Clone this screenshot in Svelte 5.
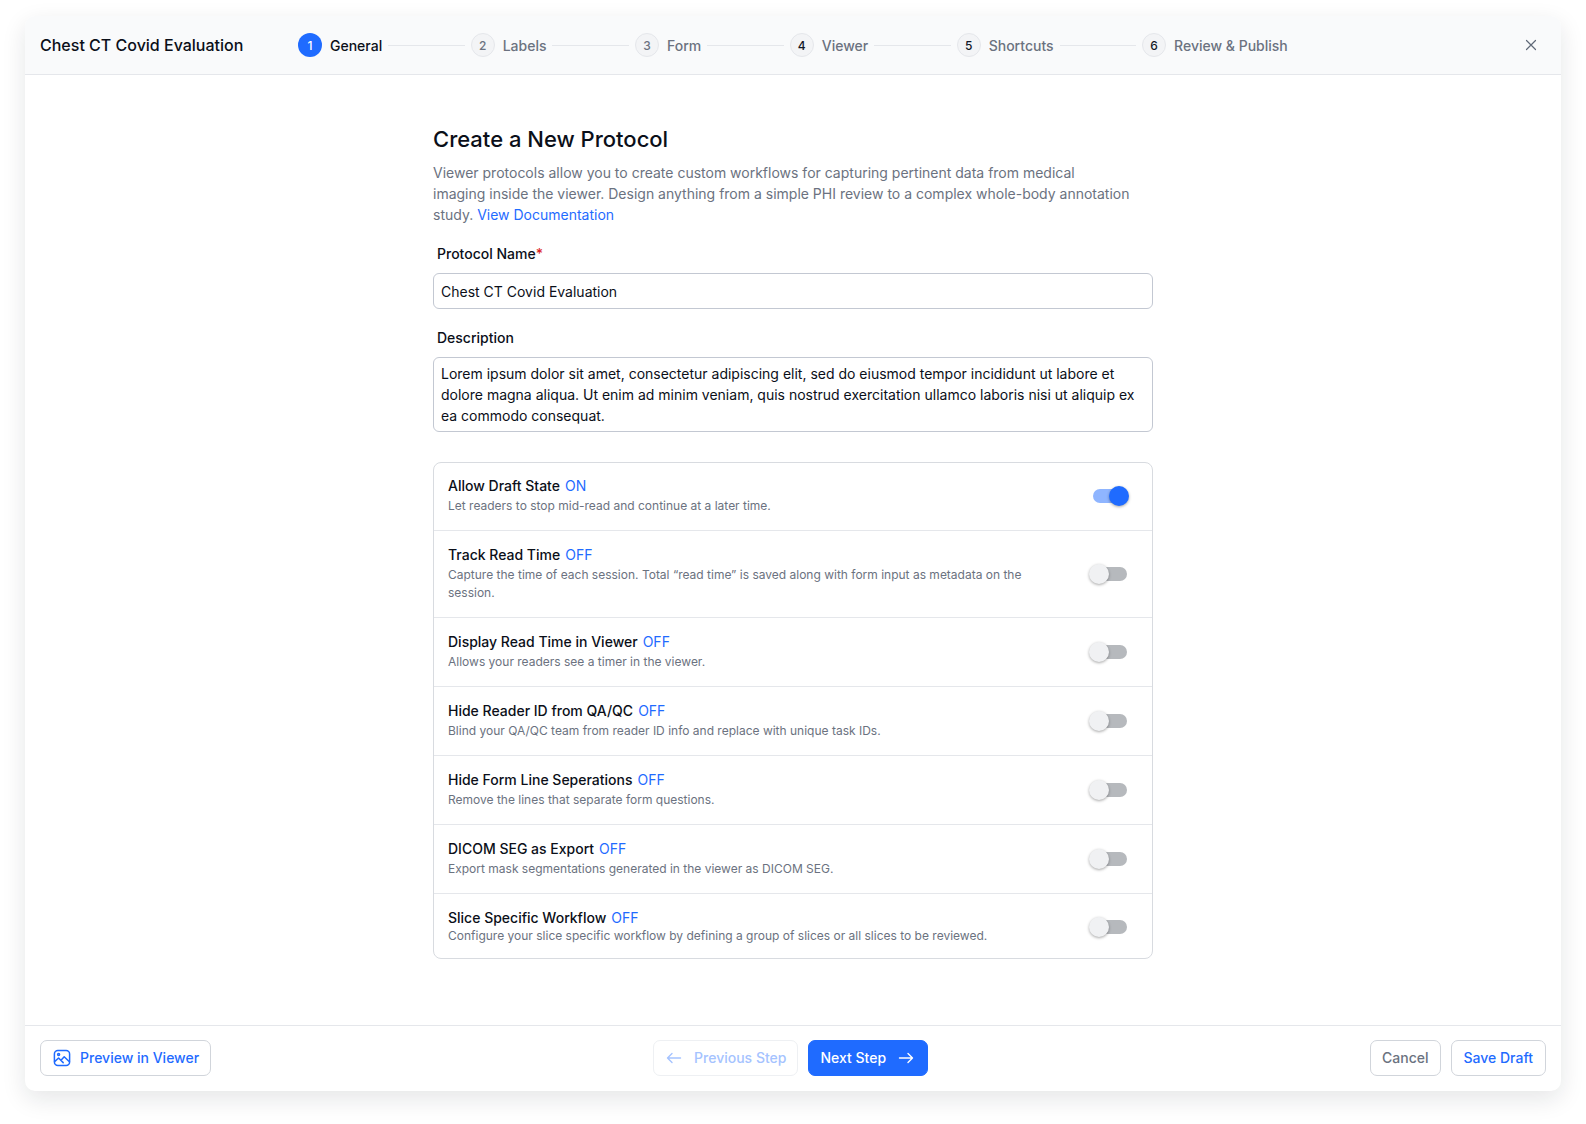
<script>
	const steps = ['General', 'Labels', 'Form', 'Viewer', 'Shortcuts', 'Review & Publish'];

	let options = $state([
		{ title: 'Allow Draft State', desc: 'Let readers to stop mid-read and continue at a later time.', on: true },
		{
			title: 'Track Read Time',
			desc: 'Capture the time of each session. Total “read time” is saved along with form input as metadata on the session.',
			on: false
		},
		{ title: 'Display Read Time in Viewer', desc: 'Allows your readers see a timer in the viewer.', on: false },
		{ title: 'Hide Reader ID from QA/QC', desc: 'Blind your QA/QC team from reader ID info and replace with unique task IDs.', on: false },
		{ title: 'Hide Form Line Seperations', desc: 'Remove the lines that separate form questions.', on: false },
		{ title: 'DICOM SEG as Export', desc: 'Export mask segmentations generated in the viewer as DICOM SEG.', on: false },
		{
			title: 'Slice Specific Workflow',
			desc: 'Configure your slice specific workflow by defining a group of slices or all slices to be reviewed.',
			on: false
		}
	]);

	let protocolName = $state('Chest CT Covid Evaluation');
	let description = $state(
		'Lorem ipsum dolor sit amet, consectetur adipiscing elit, sed do eiusmod tempor incididunt ut labore et dolore magna aliqua. Ut enim ad minim veniam, quis nostrud exercitation ullamco laboris nisi ut aliquip ex ea commodo consequat.'
	);
</script>

<div class="page">
	<div class="modal">
		<header>
			<div class="name">Chest CT Covid Evaluation</div>
			<ol class="stepper">
				{#each steps as step, i}
					{#if i > 0}<li class="line"></li>{/if}
					<li class="step" class:active={i === 0}>
						<span class="num" class:dark={i >= 3}>{i + 1}</span>
						<span>{step}</span>
					</li>
				{/each}
			</ol>
			<button class="close" aria-label="Close">
				<svg width="12" height="12" viewBox="0 0 12 12" fill="none" stroke="#5f6877" stroke-width="1.2" stroke-linecap="round">
					<path d="M1.5 1.5l9 9M10.5 1.5l-9 9" />
				</svg>
			</button>
		</header>

		<main>
			<div class="form">
				<h1>Create a New Protocol</h1>
				<p class="intro">
					Viewer protocols allow you to create custom workflows for capturing pertinent data from medical<br />
					imaging inside the viewer. Design anything from a simple PHI review to a complex whole-body annotation<br />
					study. <a href="#docs">View Documentation</a>
				</p>

				<label for="protocol-name">Protocol Name<span class="req">*</span></label>
				<input id="protocol-name" type="text" bind:value={protocolName} />

				<label for="description" class="second">Description</label>
				<textarea id="description" rows="3" bind:value={description}></textarea>

				<div class="options">
					{#each options as opt}
						<div class="option">
							<div class="text">
								<div class="title">{opt.title}<span class="state">{opt.on ? 'ON' : 'OFF'}</span></div>
								<div class="desc">{opt.desc}</div>
							</div>
							<button
								class="switch"
								class:on={opt.on}
								aria-label={opt.title}
								onclick={() => (opt.on = !opt.on)}
							>
								<span class="knob"></span>
							</button>
						</div>
					{/each}
				</div>
			</div>
		</main>

		<footer>
			<button class="btn blue preview">
				<svg width="18" height="18" viewBox="0 0 18 18" fill="none" stroke="#1f6bff" stroke-width="1.5" stroke-linejoin="round" stroke-linecap="round">
					<rect x="1.4" y="1.4" width="15.2" height="15.2" rx="3.5" />
					<circle cx="5.6" cy="5.4" r="1" />
					<path d="M1.6 12.6l4-3.6 4.6 4.6M8 11.2l3.2-3.4 5.2 5" />
				</svg>
				Preview in Viewer
			</button>

			<div class="center">
				<button class="btn prev" disabled>
					<svg width="16" height="12" viewBox="0 0 16 12" fill="none" stroke="currentColor" stroke-width="1.4" stroke-linecap="round" stroke-linejoin="round">
						<path d="M14.5 6h-13M6 1.5L1.5 6 6 10.5" />
					</svg>
					Previous Step
				</button>
				<button class="btn next">
					Next Step
					<svg width="16" height="12" viewBox="0 0 16 12" fill="none" stroke="currentColor" stroke-width="1.4" stroke-linecap="round" stroke-linejoin="round">
						<path d="M1.5 6h13M10 1.5L14.5 6 10 10.5" />
					</svg>
				</button>
			</div>

			<div class="right">
				<button class="btn grey">Cancel</button>
				<button class="btn blue save">Save Draft</button>
			</div>
		</footer>
	</div>
</div>

<style>
	:global(body) {
		margin: 0;
		background: #fff;
		font-family: Inter, 'Liberation Sans', sans-serif;
	}

	.page {
		height: 1124px;
		box-sizing: border-box;
		padding: 16px 25px 33px;
	}

	.modal {
		height: 100%;
		display: flex;
		flex-direction: column;
		background: #fff;
		border-radius: 10px;
		box-shadow: 0 8px 24px rgba(17, 24, 39, 0.11);
		overflow: hidden;
	}

	header {
		height: 58px;
		flex: none;
		display: flex;
		align-items: center;
		padding: 0 15px;
		background: #f9fafb;
		border-bottom: 1px solid #e5e7eb;
	}

	.name {
		width: 258px;
		font-size: 16px;
		font-weight: 500;
		color: #0b0f19;
	}

	.stepper {
		display: flex;
		align-items: center;
		gap: 6px;
		margin: 0;
		padding: 0;
		list-style: none;
		flex: 1;
	}

	.line {
		width: 76.5px;
		height: 1px;
		background: #e5e7eb;
	}

	.step {
		display: flex;
		align-items: center;
		gap: 8px;
		font-size: 14px;
		font-weight: 500;
		color: #6b7280;
	}

	.step.active {
		color: #0b0f19;
	}

	.num {
		width: 22px;
		height: 22px;
		display: flex;
		align-items: center;
		justify-content: center;
		border-radius: 50%;
		font-size: 12px;
		color: #6b7280;
		background: #f3f4f6;
		border: 1px solid #e5e7eb;
	}

	.num.dark {
		color: #111827;
	}

	.active .num {
		width: 24px;
		height: 24px;
		color: #fff;
		background: #1f6bff;
		border: 0;
	}

	.close {
		width: 24px;
		height: 24px;
		padding: 0;
		display: flex;
		align-items: center;
		justify-content: center;
		margin-right: 3px;
		background: none;
		border: 0;
	}

	main {
		flex: 1;
		min-height: 0;
		overflow: hidden;
		padding-top: 49px;
	}

	.form {
		width: 720px;
		margin: 0 auto;
	}

	h1 {
		margin: 0;
		font-size: 22px;
		line-height: 30px;
		font-weight: 500;
		color: #0b0f19;
	}

	.intro {
		margin: 8px 0 0;
		font-size: 14px;
		line-height: 21px;
		white-space: nowrap;
		color: #6b7280;
	}

	.intro a {
		color: #1f6bff;
		text-decoration: none;
	}

	label {
		display: block;
		margin: 19px 0 9px 4px;
		font-size: 14px;
		line-height: 20px;
		font-weight: 500;
		color: #0b0f19;
	}

	.req {
		color: #dc2626;
	}

	input,
	textarea {
		display: block;
		width: 100%;
		box-sizing: border-box;
		padding: 7px;
		font-family: inherit;
		font-size: 14px;
		line-height: 21px;
		color: #0b0f19;
		background: #fff;
		border: 1px solid #c3c8d2;
		border-radius: 6px;
		outline: none;
		resize: none;
	}

	input {
		height: 36px;
	}

	textarea {
		height: 75px;
		padding-top: 5px;
		overflow: hidden;
	}

	.options {
		margin-top: 30px;
		border: 1px solid #d8dbe0;
		border-radius: 8px;
	}

	.option {
		display: flex;
		align-items: center;
		justify-content: space-between;
		padding: 14px 25px 15px 14px;
		border-top: 1px solid #e5e7eb;
	}

	.option:first-child {
		padding-top: 13px;
		border-top: 0;
	}

	.option:last-child {
		padding-bottom: 13px;
	}

	.text {
		width: 600px;
	}

	.title {
		font-size: 14px;
		line-height: 20px;
		font-weight: 500;
		color: #0b0f19;
		margin-bottom: 1px;
	}

	.option:last-child .title {
		margin-bottom: -1px;
	}

	.state {
		margin-left: 5px;
		color: #1f6bff;
		font-weight: 400;
	}

	.desc {
		font-size: 12px;
		line-height: 18px;
		color: #6b7280;
	}

	.switch {
		position: relative;
		width: 34px;
		height: 14px;
		padding: 0;
		flex: none;
		border: 0;
		border-radius: 7px;
		background: #b6b9bd;
	}

	.switch.on {
		background: #8fb5ff;
	}

	.knob {
		position: absolute;
		top: -3px;
		left: -4px;
		width: 20px;
		height: 20px;
		border-radius: 50%;
		background: #f0f1f3;
		box-shadow: 0 1px 3px rgba(0, 0, 0, 0.35);
	}

	.on .knob {
		left: 16px;
		background: #1f6bff;
	}

	footer {
		height: 66px;
		flex: none;
		box-sizing: border-box;
		display: flex;
		justify-content: space-between;
		align-items: center;
		padding: 0 15px 2px;
		border-top: 1px solid #e5e7eb;
	}

	.center,
	.right {
		display: flex;
		gap: 10px;
	}

	.btn {
		height: 36px;
		box-sizing: border-box;
		display: inline-flex;
		align-items: center;
		gap: 12px;
		padding: 0 12px;
		font-family: inherit;
		font-size: 14px;
		font-weight: 500;
		background: #fff;
		border: 1px solid #d1d5db;
		border-radius: 7px;
	}

	.preview {
		gap: 9px;
		padding-right: 11px;
	}

	.blue {
		color: #1f6bff;
	}

	.save {
		padding-left: 11px;
	}

	.grey {
		color: #6b7280;
		padding: 0 12px 0 11px;
	}

	.prev {
		color: #a5c3ff;
		border-color: #eef0f3;
		padding-right: 11px;
	}

	.next {
		color: #fff;
		background: #1f6bff;
		border-color: #1f6bff;
		padding: 0 13px 0 11px;
	}
</style>
